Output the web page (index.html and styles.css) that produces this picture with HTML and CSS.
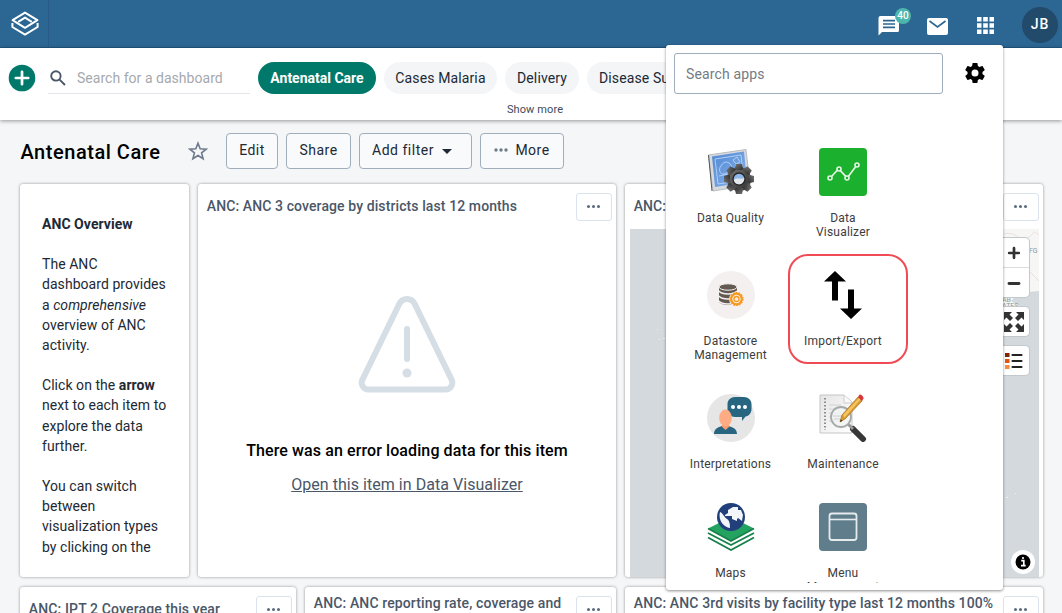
FILE: index.html
```html
<!DOCTYPE html>
<html lang="en">
<head>
<meta charset="utf-8">
<title>Dashboard</title>
<link rel="stylesheet" href="styles.css">
</head>
<body>
<header class="topbar">
  <div class="logo">
    <svg width="28" height="26" viewBox="0 0 28 26" fill="none" stroke="#fff" stroke-width="2" stroke-linejoin="round"><path d="M14 1.6 26.4 9.2 14 16.8 1.6 9.2z"/><path d="M7.2 10.8 14 6.6l6.8 4.2"/><path d="M1.4 12v4L14 23.6 26.6 16v-4"/></svg>
  </div>
  <div class="tools">
    <div class="tool chat">
      <svg width="22" height="22" viewBox="0 0 22 22"><path fill="#fff" d="M2.500 1h17A1.500 1.500 0 0 1 21 2.500v13a1.500 1.500 0 0 1-1.500 1.500H4l-3.500 3.500V3a2 2 0 0 1 2-2z"/><path stroke="#2c6693" stroke-width="1.700" d="M5 5.700h12M5 9h12M5 12.300h12"/></svg>
      <span class="count">40</span>
    </div>
    <svg class="tool mail" width="21" height="17" viewBox="0 0 21 17"><rect width="21" height="17" rx="2" fill="#fff"/><path d="M2.500 3 10.500 9l8-6" fill="none" stroke="#2c6693" stroke-width="1.600"/></svg>
    <svg class="tool apps" width="17" height="17" viewBox="0 0 17 17"><path fill="#fff" d="M0 0h4.500v4.500H0zM6.200 0h4.600v4.500H6.200zM12.500 0H17v4.500h-4.500zM0 6.200h4.500v4.600H0zM6.200 6.200h4.600v4.600H6.200zM12.500 6.200H17v4.600h-4.500zM0 12.500h4.500V17H0zM6.200 12.500h4.600V17H6.200zM12.500 12.500H17V17h-4.500z"/></svg>
    <div class="avatar">JB</div>
  </div>
</header>

<nav class="dashboards">
  <div class="dash-row">
    <svg class="add" width="28" height="28" viewBox="0 0 28 28"><circle cx="14" cy="14" r="13.300" fill="#00796b"/><path d="M14 7.800v12.400M7.800 14h12.400" stroke="#fff" stroke-width="2.700" stroke-linecap="round"/></svg>
    <div class="search">
      <svg width="16" height="16" viewBox="0 0 16 16" fill="none" stroke="#4a5768" stroke-width="1.900"><circle cx="5.900" cy="5.900" r="4.700"/><path d="M9.300 9.300 15 15"/></svg>
      <span>Search for a dashboard</span>
    </div>
    <div class="chip selected">Antenatal Care</div>
    <div class="chip malaria">Cases Malaria</div>
    <div class="chip delivery">Delivery</div>
    <div class="chip disease">Disease Su</div>
  </div>
  <div class="show-more">Show more</div>
</nav>

<section class="titlebar">
  <h1>Antenatal Care</h1>
  <svg class="star" width="20" height="20" viewBox="0 0 20 20" fill="none" stroke="#6e7a8a" stroke-width="1.600"><path d="m10 2.200 2.200 5.500 6 .4-4.600 3.800 1.500 5.800L10 14.500l-5.100 3.200 1.500-5.800L1.800 8.100l6-.4z"/></svg>
  <div class="button edit">Edit</div>
  <div class="button share">Share</div>
  <div class="button filter">Add filter <svg width="10" height="5" viewBox="0 0 10 5"><path d="M0 0h10L5 5z" fill="#212934"/></svg></div>
  <div class="button more"><svg width="14" height="4" viewBox="0 0 14 4" fill="#6e7a8a"><circle cx="2" cy="2" r="1.700"/><circle cx="7" cy="2" r="1.700"/><circle cx="12" cy="2" r="1.700"/></svg>More</div>
</section>

<main class="board">
  <div class="row first">
    <article class="card overview">
      <p><b>ANC Overview</b></p>
      <p>The ANC<br>dashboard provides<br>a <i>comprehensive</i><br>overview of ANC<br>activity.</p>
      <p>Click on the <b>arrow</b><br>next to each item to<br>explore the data<br>further.</p>
      <p>You can switch<br>between<br>visualization types<br>by clicking on the</p>
    </article>
    <article class="card">
      <div class="card-head"><h2 class="t1">ANC: ANC 3 coverage by districts last 12 months</h2><span class="menu-button"><i></i><i></i><i></i></span></div>
      <div class="error">
        <svg width="98" height="98" viewBox="0 0 98 98" fill="none" stroke="#d5dde5" stroke-width="6" stroke-linecap="round" stroke-linejoin="round"><path d="M41.500 8.500a8.500 8.500 0 0 1 15 0l37 76a6.800 6.800 0 0 1-6 10h-77a6.800 6.800 0 0 1-6-10z"/><path d="M49 34v30"/><circle cx="49" cy="78" r="4.500" fill="#d5dde5" stroke="none"/></svg>
        <strong>There was an error loading data for this item</strong>
        <a>Open this item in Data Visualizer</a>
      </div>
    </article>
    <article class="card">
      <div class="card-head"><h2>ANC:</h2><span class="menu-button"><i></i><i></i><i></i></span></div>
      <div class="map">
        <svg class="land" width="409" height="349" viewBox="0 0 409 349"><path fill="#f6f6f4" d="M300 0h109v62l-20 2-8 8 10 6 5 12-22-3z"/><path d="M374 5c12-4 16 10 24 4s4-8 11-3M376 44c14 0 16 8 23 3M397 40l12 12" fill="none" stroke="#eadfdf"/><path fill="#edf0f1" d="M27 100h1v1h-1zm6 9h2v1h-2zm-4 1h1v1h-1zm347 158h2v1h-2zm9-4h1v1h-1z"/><text x="399" y="24" class="map-label">FG</text><text x="372" y="73" class="map-label">AB</text><text x="372" y="79" class="map-label">ATES</text></svg>
        <div class="controls">
          <div class="zoom-box">
            <svg width="30" height="30" viewBox="0 0 30 30"><path d="M15 10.500v10M10 15.500h10" stroke="#333" stroke-width="2.800" stroke-linecap="round"/></svg>
            <svg width="30" height="30" viewBox="0 0 30 30"><path d="M10 15.500h10" stroke="#333" stroke-width="2.800" stroke-linecap="round"/></svg>
          </div>
          <div class="control"><svg width="20" height="20" viewBox="0 0 20 20"><path fill="#333" d="M0 0h8L5.500 2.500 9 6 6 9 2.500 5.500 0 8zM20 0h-8l2.500 2.500L11 6l3 3 3.500-3.500L20 8zM0 20h8l-2.500-2.500L9 14l-3-3-3.500 3.500L0 12zM20 20h-8l2.500-2.500L11 14l3-3 3.500 3.500L20 12z"/></svg></div>
          <div class="control legend"><svg width="18" height="18" viewBox="0 0 18 18"><path fill="#7f2704" d="M0 1h4.500v4H0z"/><path fill="#e6550d" d="M0 7h4.500v4H0z"/><path fill="#fd8d3c" d="M0 13h4.500v4H0z"/><path d="M7.500 3h9M7.500 9h9M7.500 15h9" stroke="#222" stroke-width="2.200" stroke-linecap="round"/></svg></div>
        </div>
        <svg class="info" width="24" height="24" viewBox="0 0 24 24"><circle cx="12" cy="12" r="12" fill="#fff"/><circle cx="12" cy="12" r="7.500"/><path d="M10.200 10.700h2.600v4.600M10 15.600h4.700" stroke="#fff" stroke-width="1.700" fill="none"/><circle cx="12" cy="8" r="1.100" fill="#fff"/></svg>
      </div>
    </article>
  </div>
  <div class="row second">
    <article class="card"><div class="card-head low"><h2 class="t2">ANC: IPT 2 Coverage this year</h2><span class="menu-button"><i></i><i></i><i></i></span></div></article>
    <article class="card"><div class="card-head"><h2 class="t3">ANC: ANC reporting rate, coverage and</h2><span class="menu-button"><i></i><i></i><i></i></span></div></article>
    <article class="card"><div class="card-head"><h2 class="t4">ANC: ANC 3rd visits by facility type last 12 months 100%</h2><span class="menu-button"><i></i><i></i><i></i></span></div></article>
  </div>
</main>

<aside class="launcher">
  <div class="launcher-head">
    <div class="app-search">Search apps</div>
    <svg width="24" height="24" viewBox="0 0 24 24"><path d="M19.430 12.980c.04-.32.07-.64.07-.98s-.03-.66-.07-.98l2.110-1.650c.19-.15.24-.42.12-.64l-2-3.460c-.12-.22-.39-.3-.61-.22l-2.490 1c-.52-.4-1.080-.73-1.690-.98l-.38-2.650C14.460 2.180 14.250 2 14 2h-4c-.25 0-.46.18-.49.42l-.38 2.650c-.61.25-1.170.59-1.690.98l-2.490-1c-.23-.09-.49 0-.61.22l-2 3.460c-.13.22-.07.49.12.64l2.110 1.650c-.04.32-.07.65-.07.98s.03.66.07.98l-2.110 1.650c-.19.15-.24.42-.12.64l2 3.460c.12.22.39.3.61.22l2.490-1c.52.4 1.080.73 1.690.98l.38 2.650c.03.24.24.42.49.42h4c.25 0 .46-.18.49-.42l.38-2.650c.61-.25 1.170-.59 1.690-.98l2.490 1c.23.09.49 0 .61-.22l2-3.460c.12-.22.07-.49-.12-.64l-2.110-1.650zM12 15.500a3.500 3.500 0 1 1 0-7 3.500 3.500 0 0 1 0 7z"/></svg>
  </div>
  <div class="app-grid">
    <div class="app">
      <svg width="48" height="48" viewBox="0 0 48 48"><defs><linearGradient id="blueprint" x2="1" y2="1"><stop stop-color="#5288d3"/><stop offset="1" stop-color="#87b4ec"/></linearGradient><linearGradient id="metal" x2="1" y2="1"><stop stop-color="#777"/><stop offset="1" stop-color="#2c2c2c"/></linearGradient></defs><path d="M1.500 7 39 1.500 43 37 6 43z" fill="#d7dadd" stroke="#b9bcc0"/><path d="M1.500 7 5 43" stroke="#555"/><path d="M5 8.500 37 3.500 40 34 8 39z" fill="url(#blueprint)"/><path d="M8 11 34 7l3 25-26 4zM14 18c3-6 8-4 10-1s-3 8-7 9-6-5-3-8zm12-6 4-3 3 5-4 2zM12 28l13-3M28 18l4-2" fill="none" stroke="#b7d4f7" stroke-width=".9"/><g transform="translate(32 31)"><g fill="url(#metal)"><circle r="12"/><path id="tooth" d="M-3-15h6l1.500 6h-9z"/><path d="M-3-15h6l1.500 6h-9z" transform="rotate(45)"/><path d="M-3-15h6l1.500 6h-9z" transform="rotate(90)"/><path d="M-3-15h6l1.500 6h-9z" transform="rotate(135)"/><path d="M-3-15h6l1.500 6h-9z" transform="rotate(180)"/><path d="M-3-15h6l1.500 6h-9z" transform="rotate(225)"/><path d="M-3-15h6l1.500 6h-9z" transform="rotate(270)"/><path d="M-3-15h6l1.500 6h-9z" transform="rotate(315)"/></g><circle r="6" fill="#8fb7ea" stroke="#292929" stroke-width="1.500"/><path d="M-5.300 1C-2-2 2 1 5.300-1 5 7-4 7-5.300 1z" fill="#e5e8ec"/></g></svg>
      <span>Data Quality</span>
    </div>
    <div class="app">
      <svg width="48" height="48" viewBox="0 0 48 48"><rect width="48" height="48" rx="4" fill="#1bb02d"/><path d="m12.500 28.500 6-6.500m2.700.4 5.500 6m2.600 0 7.300-9.700" fill="none" stroke="#e3f6e4" stroke-width="1.700"/><g fill="none" stroke="#e3f6e4" stroke-width="1.600"><circle cx="11" cy="30" r="2"/><circle cx="20" cy="21" r="2"/><circle cx="28" cy="30" r="2"/><circle cx="38" cy="17" r="2"/></g></svg>
      <span>Data<br>Visualizer</span>
    </div>
    <div class="app">
      <svg width="48" height="48" viewBox="0 0 48 48"><circle cx="24" cy="24" r="24" fill="#f4f0ef"/><path d="M12 16v15c3 4 14 4 18 0V16z" fill="#625952"/><ellipse cx="21" cy="16" rx="9" ry="3.200" fill="#625952" stroke="#f4f0ef"/><path d="M12 20c3 4 15 4 18 0M12 25c3 4 15 4 18 0M12 30c3 4 15 4 18 0" fill="none" stroke="#f4f0ef" stroke-width="1.300"/><circle cx="29.500" cy="28" r="7.500" fill="#f4f0ef"/><circle cx="29.500" cy="28" r="5.300" fill="none" stroke="#f7981d" stroke-width="2.200"/><circle cx="29.500" cy="28" r="6.500" fill="none" stroke="#f7981d" stroke-width="1.200" stroke-dasharray="1.700 1.200"/><circle cx="29.500" cy="28" r="2.500" fill="none" stroke="#f7981d" stroke-width="1.300"/></svg>
      <span>Datastore<br>Management</span>
    </div>
    <div class="app marked">
      <svg width="48" height="48" viewBox="0 0 48 48"><path d="M16 0 27 10.500h-8V29.500h-6V10.500H5zM29 18.500h6v19h8L32 48 21 37.500h8z"/></svg>
      <span>Import/Export</span>
    </div>
    <div class="app">
      <svg width="48" height="48" viewBox="0 0 48 48"><circle cx="24" cy="24" r="24" fill="#e6e6e6"/><path d="M28 3h9c4 0 7.500 3 7.500 7v5c0 4-2.500 7-6 7.500L35 27v-4h-7c-4 0-7.500-3-7.500-7v-6c0-4 3.500-7 7.500-7z" fill="#286580"/><path d="M7 40c0-5 4-7 8-8l3 2 3-2c5 1 9 3 9 8z" fill="#286580"/><path d="M15 29h7v4l-3.500 3-3.500-3z" fill="#f49c70"/><ellipse cx="18.500" cy="24" rx="6.300" ry="8.500" fill="#ffab83"/><g fill="#fff"><circle cx="26" cy="13" r="2"/><circle cx="32" cy="13" r="2"/><circle cx="38" cy="13" r="2"/></g></svg>
      <span>Interpretations</span>
    </div>
    <div class="app">
      <svg width="48" height="48" viewBox="0 0 48 48"><defs><linearGradient id="paper" x2="1" y2="1"><stop stop-color="#e5e5e5"/><stop offset="1" stop-color="#fff"/></linearGradient></defs><path d="M1 1h24l8 7v31H1z" fill="url(#paper)" stroke="#c5c5c5"/><path d="M25 1v8h8" fill="#fafafa" stroke="#ccc"/><path d="M6 4v32" stroke="#777" stroke-width="1.600" stroke-dasharray="1.500 2"/><path d="M10 11h12M10 15h16M10 19h13M10 23h14M10 27h12" stroke="#ccc" stroke-width=".8"/><path d="m34 35 10 10" stroke="#373737" stroke-width="6" stroke-linecap="round"/><path d="m29 30 5 5" stroke="#999" stroke-width="3"/><circle cx="22" cy="23" r="10" fill="#f3f5f5" fill-opacity=".8" stroke="#a7aaab" stroke-width="1.800"/><path d="M14 22h12M15 25h10" stroke="#ccc"/><path d="m21 28 2-7L39 3l4 4-17 18z" fill="#d99b30" stroke="#a76c20" stroke-width=".7"/><path d="m24 21 16-17 1.500 1.500-16 18z" fill="#f4c661"/><path d="m39 3 1.500-2.500c2 0 4 2 4 4L43 7z" fill="#d9363c"/><path d="m21 28 .8-2.500 1.800 1.200z" fill="#333"/></svg>
      <span>Maintenance</span>
    </div>
    <div class="app">
      <svg width="48" height="48" viewBox="0 0 48 48"><path d="M1 25.500 24 14l23 11.500L24 38z" fill="#24a260"/><path d="m1 30 23 12 23-12M1 34.500 24 47l23-12.500" fill="none" stroke="#17814b" stroke-width="1.800"/><path d="M1 25.500 24 38l23-12.500" fill="none" stroke="#17814b" stroke-width="1.800"/><circle cx="24" cy="14" r="14" fill="#213f7b"/><path d="M13 9c3 1 4 5 7 7 3 2 3 6 3 9-7-1-12-8-10-16zM18 12l3-2V7l5-3h5v3h3l2 5-1 6-4-3-1 1v2l-5-2v-3h-7z" fill="#f2f6fb"/></svg>
      <span>Maps</span>
    </div>
    <div class="app">
      <svg width="48" height="48" viewBox="0 0 48 48"><rect width="48" height="48" rx="4" fill="#607d8b"/><rect x="10.500" y="10.500" width="27" height="26.500" rx="2.500" fill="none" stroke="#e5ebed" stroke-width="1.800"/><path d="M10.500 16.500h27" stroke="#e5ebed" stroke-width="1.600"/></svg>
      <span>Menu<br>Management</span>
    </div>
  </div>
</aside>
</body>
</html>
```
FILE: styles.css
```css
*, *::after { box-sizing: border-box; }
html { overflow: hidden; }
body { margin: 0; width: 1062px; height: 613px; overflow: hidden; position: relative; background: #f4f6f8; color: #212934; font-family: Roboto, sans-serif; }
svg { display: block; flex: none; }

.topbar { height: 48px; display: flex; justify-content: space-between; background: #2c6693; border-bottom: 1px solid #235780; }
.logo { width: 49px; padding: 11px 0 0 11px; border-right: 1px solid #265c87; }
.tools { display: flex; align-items: flex-start; }
.chat { position: relative; margin: 15px 27px 0 0; }
.count { position: absolute; left: 17px; top: -7px; width: 16px; height: 16px; border-radius: 50%; background: #4db6ac; color: #fff; font-size: 10px; font-weight: 500; line-height: 16px; text-align: center; }
.mail { margin: 18px 29px 0 0; }
.apps { margin: 17px 28px 0 0; }
.avatar { width: 36px; height: 36px; margin: 7px 4px 0 0; border-radius: 50%; background: #214a6b; color: #fff; font-size: 14px; font-weight: 500; line-height: 35px; text-align: center; letter-spacing: 1px; }

.dashboards { height: 72px; background: #fff; box-shadow: 0 1px 4px rgba(0, 0, 0, .4); position: relative; }
.dash-row { display: flex; height: 62px; padding: 14px 0 0 8px; white-space: nowrap; overflow: hidden; }
.add { margin-top: 2px; }
.search { display: flex; align-items: center; gap: 11px; width: 202px; height: 32px; margin: 0 8px 0 12px; padding-left: 2px; border-bottom: 1px solid #e1e4e8; color: #a5a9ae; font-size: 14px; letter-spacing: .03px; }
.chip { flex: none; height: 32px; margin-right: 8px; border-radius: 16px; background: #f3f5f7; font-size: 14px; line-height: 33px; text-align: center; letter-spacing: .12px; }
.selected { width: 118px; background: #00796b; color: #fff; font-weight: 700; letter-spacing: 0; }
.malaria { width: 113px; }
.delivery { width: 74px; }
.disease { width: 150px; padding-left: 12px; text-align: left; }
.show-more { position: absolute; left: 495px; top: 55px; width: 80px; text-align: center; font-size: 11px; line-height: 14px; color: #404b5a; letter-spacing: .1px; }

.titlebar { display: flex; align-items: flex-start; height: 64px; padding: 13px 0 0 20px; }
h1 { margin: 0; width: 168px; font-size: 20px; font-weight: 500; line-height: 38px; color: #000; letter-spacing: .53px; padding-left: .5px; }
.star { margin: 8px 18.5px 0 -.5px; }
.button { display: flex; align-items: center; justify-content: center; height: 36px; padding-bottom: 2px; margin-right: 8px; border: 1px solid #a0adba; border-radius: 4px; background: #f9fafb; font-size: 14px; letter-spacing: .5px; white-space: nowrap; }
.edit { width: 52px; }
.share { width: 65px; }
.filter { width: 113px; gap: 8px; padding-right: 7px; }
.filter svg { margin-top: 3px; }
.more { width: 84px; gap: 7px; }

.board { padding: 0 19px 0 20px; display: grid; gap: 10px; }
.row { display: grid; gap: 9px; }
.first { grid-template-columns: 169px 418px 418px; height: 393px; }
.second { grid-template-columns: 276px 311px 418px; height: 60px; }
.card { background: #fff; border-radius: 3px; box-shadow: 0 0 3px rgba(0, 0, 0, .42); overflow: hidden; }
.overview { padding: 30px 0 0 22px; font-size: 14px; line-height: 20.2px; white-space: nowrap; letter-spacing: .05px; }
.overview p { margin: 0 0 20px; }
.card-head { display: flex; justify-content: space-between; height: 45px; padding: 8.5px 4.5px 0 8.8px; }
h2 { margin: 0; font-size: 14px; line-height: 26px; height: 27px; font-weight: 500; color: #4a5768; white-space: nowrap; }
.t1 { letter-spacing: .1px; }
.t2 { letter-spacing: .13px; }
.t3 { letter-spacing: .12px; }
.t4 { letter-spacing: .11px; }
.second h2 { margin-top: -6px; }
.second .low h2 { margin-top: 0; }
.menu-button { flex: none; display: flex; align-items: center; justify-content: center; gap: 2px; width: 36px; height: 28px; border: 1px solid #dbe3ed; border-radius: 3px; }
.menu-button i { width: 3px; height: 3px; border-radius: 50%; background: #5c6b7d; }
.error { display: flex; flex-direction: column; align-items: center; padding-top: 66px; color: #000; font-size: 16px; }
.error strong { margin-top: 48px; line-height: 20px; font-weight: 500; letter-spacing: .1px; }
.error a { margin-top: 14px; line-height: 20px; color: #4a5768; text-decoration: underline; letter-spacing: .04px; }
.map { position: relative; width: 409px; height: 349px; margin-left: 5px; background: #d3d9dc; }
.land { position: absolute; left: 0; top: 0; }
.map-label { font: 7px Roboto, sans-serif; fill: #8d989d; }
.controls { position: absolute; left: 369px; top: 9px; }
.zoom-box, .control { width: 30px; border-radius: 4px; background: #fff; box-shadow: 0 0 0 1px #c3c8ca; }
.zoom-box { height: 59px; }
.zoom-box svg:first-child { border-bottom: 1px solid #ddd; }
.control { display: grid; place-items: center; height: 29px; margin-top: 10px; }
.info { position: absolute; left: 381px; top: 321px; }

.launcher { position: absolute; left: 666px; top: 45px; width: 337px; height: 545px; background: #fff; border-radius: 3px; box-shadow: 0 1px 3px rgba(0, 0, 0, .45); z-index: 2; }
.launcher-head { display: flex; gap: 20px; padding: 8px 0 0 8px; height: 91px; }
.launcher-head svg { margin-top: 8px; }
.app-search { width: 269px; height: 41px; padding-left: 11px; border: 1px solid #a0adba; border-radius: 3px; font-size: 14px; line-height: 40px; color: #757b83; letter-spacing: .15px; }
.app-grid { display: grid; grid-template-columns: 113px 112px; align-content: start; height: 447px; overflow: hidden; padding-left: 8px; }
.app { position: relative; display: flex; flex-direction: column; align-items: center; padding: 12px 0 20px; text-align: center; font-size: 12px; line-height: 14px; color: #3c3c3c; letter-spacing: .2px; }
.app span { margin-top: 15px; }
.marked::after { content: ""; position: absolute; left: 1px; top: -5px; width: 120px; height: 110px; border: 2.500px solid #f04b55; border-radius: 20px; }
```
